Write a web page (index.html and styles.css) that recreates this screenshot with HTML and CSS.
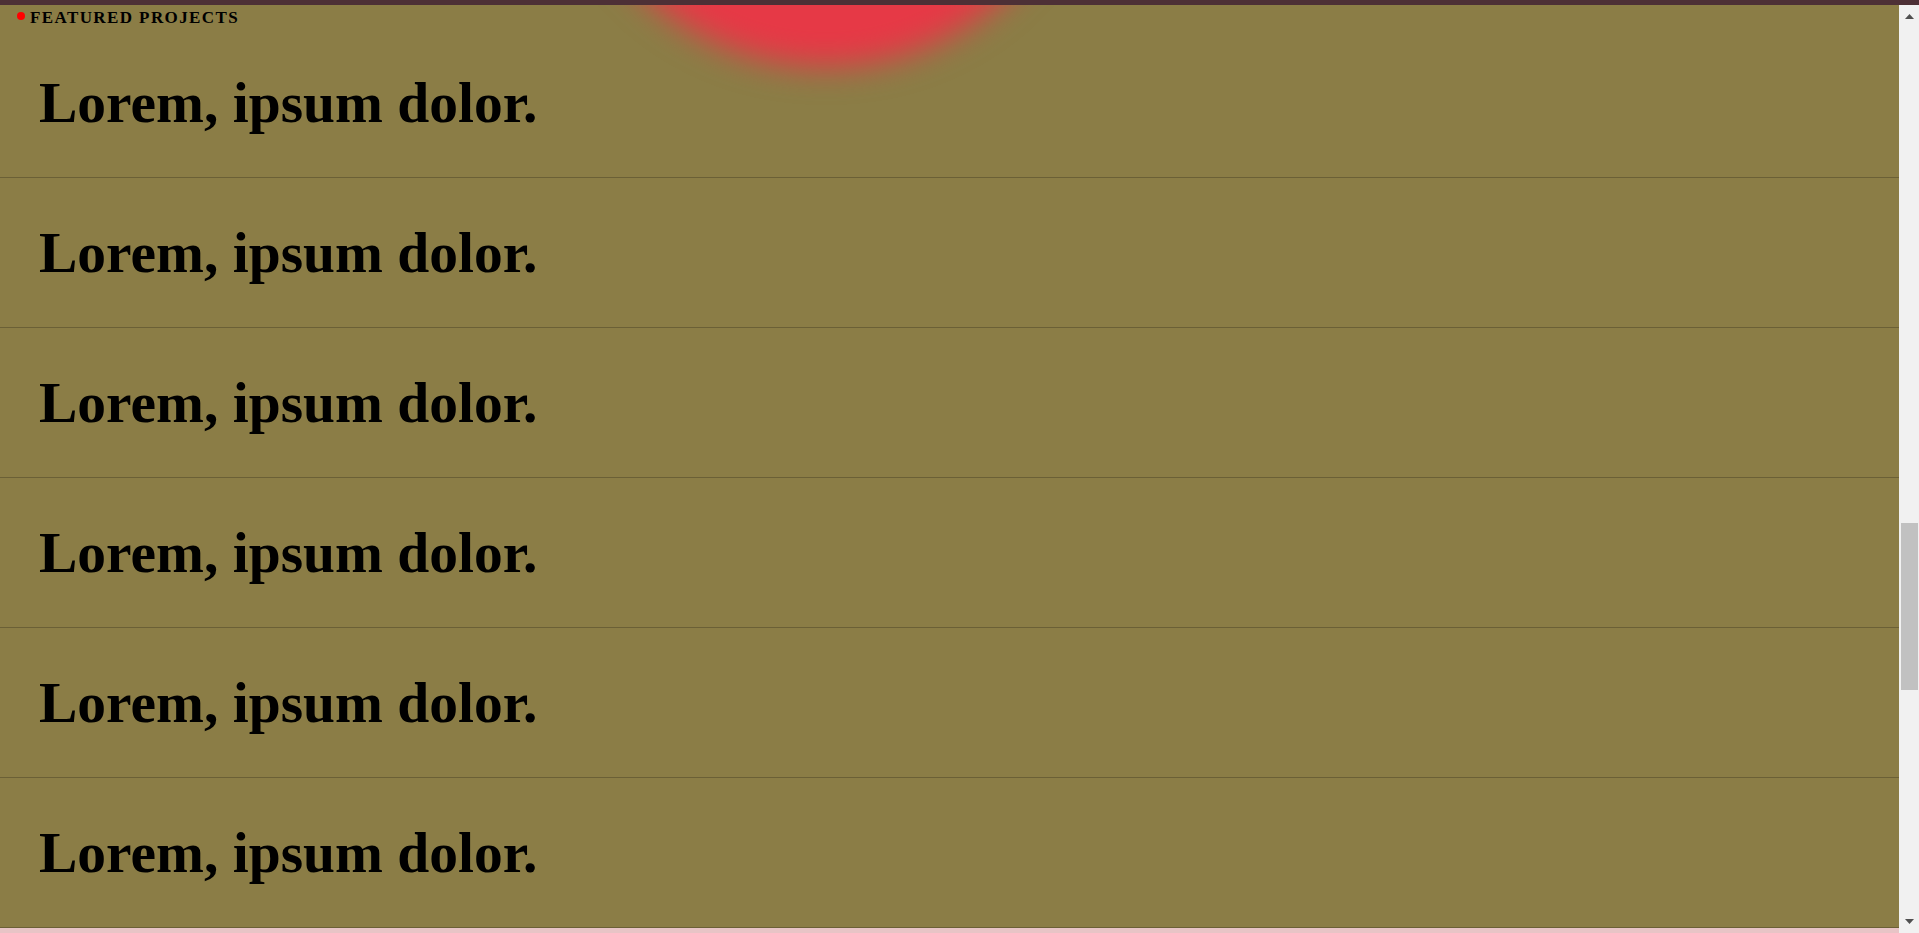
FILE: index.html
```html
<!DOCTYPE html>
<html lang="en">
<head>
<meta charset="utf-8">
<title>Featured Projects</title>
<link rel="stylesheet" href="styles.css">
</head>
<body>
<div class="topbar"></div>
<div class="viewport">
  <main class="content">
    <div class="blob"></div>
    <header class="section-head">
      <span class="dot"></span>
      <span class="label">FEATURED PROJECTS</span>
    </header>
    <ul class="projects">
      <li class="project"><h2 class="project-title">Lorem, ipsum dolor.</h2></li>
      <li class="project"><h2 class="project-title">Lorem, ipsum dolor.</h2></li>
      <li class="project"><h2 class="project-title">Lorem, ipsum dolor.</h2></li>
      <li class="project"><h2 class="project-title">Lorem, ipsum dolor.</h2></li>
      <li class="project"><h2 class="project-title">Lorem, ipsum dolor.</h2></li>
      <li class="project"><h2 class="project-title">Lorem, ipsum dolor.</h2></li>
    </ul>
    <section class="next-section"></section>
  </main>
  <div class="scrollbar">
    <div class="sb-btn">
      <svg width="9" height="5" viewBox="0 0 9 5"><polygon points="4.5,0 9,5 0,5" fill="#505050"/></svg>
    </div>
    <div class="sb-track">
      <div class="sb-thumb"></div>
    </div>
    <div class="sb-btn">
      <svg width="9" height="5" viewBox="0 0 9 5"><polygon points="0,0 9,0 4.5,5" fill="#505050"/></svg>
    </div>
  </div>
</div>
</body>
</html>
```

FILE: styles.css
```css
* { box-sizing: border-box; }

html, body {
  margin: 0;
  padding: 0;
  height: 100%;
  overflow: hidden;
}

body {
  font-family: "Liberation Serif", "Times New Roman", serif;
  background: #e8c4c6;
  color: #000;
}

.topbar {
  height: 5px;
  background: #4d3036;
}

.viewport {
  display: flex;
  height: 928px;
}

.content {
  flex: 1;
  position: relative;
  overflow: hidden;
  display: flex;
  flex-direction: column;
  background: #8b7d46;
}

.blob {
  position: absolute;
  left: 562px;
  top: -466px;
  width: 528px;
  height: 528px;
  border-radius: 50%;
  background: #e63946;
  filter: blur(16px);
}

.section-head {
  position: relative;
  height: 23px;
  padding: 4px 0 0 17px;
  display: flex;
  align-items: flex-start;
  gap: 5px;
}

.dot {
  width: 8px;
  height: 8px;
  margin-top: 3px;
  border-radius: 50%;
  background: #ff0000;
}

.label {
  font-size: 17px;
  line-height: 17px;
  font-weight: 700;
  letter-spacing: 1.4px;
}

.projects {
  position: relative;
  list-style: none;
  margin: 0;
  padding: 0;
}

.project {
  height: 150px;
  padding: 46px 0 0 39px;
  border-bottom: 1px solid #6b6036;
}

.project-title {
  margin: 0;
  font-size: 57.5px;
  line-height: 57.5px;
  font-weight: 700;
}

.next-section {
  flex: 1;
  background: #e8c4c6;
}

.scrollbar {
  width: 20px;
  display: flex;
  flex-direction: column;
  background: #f1f1f1;
}

.sb-btn {
  height: 23px;
  display: flex;
  align-items: center;
  justify-content: center;
  padding-left: 1px;
}

.sb-track {
  flex: 1;
  padding: 495px 1px 0 2px;
}

.sb-thumb {
  height: 167px;
  background: #c1c1c1;
}
```
